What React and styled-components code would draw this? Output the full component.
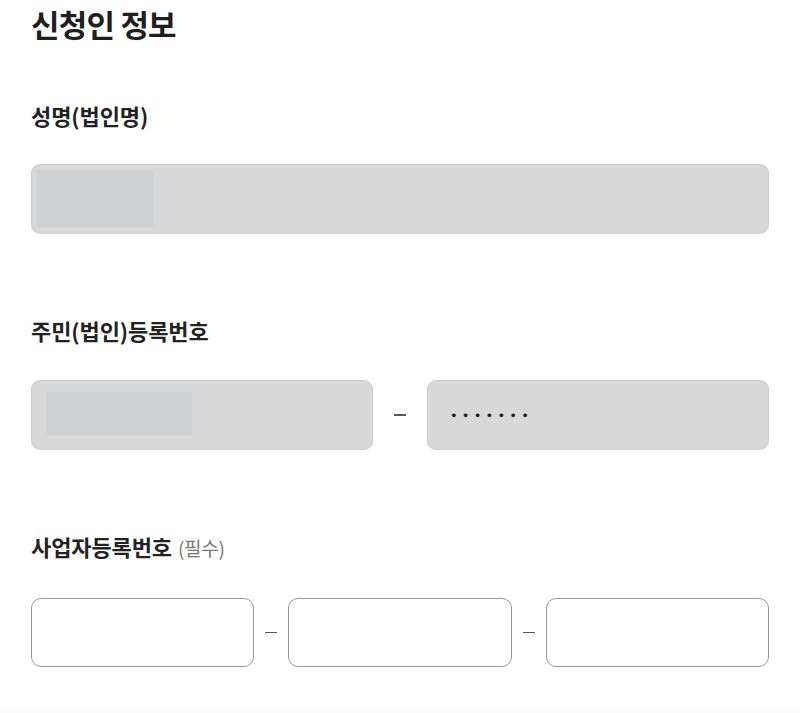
import React from 'react';
import styled, { createGlobalStyle } from 'styled-components';

const GlobalStyle = createGlobalStyle`
  html, body {
    margin: 0;
    padding: 0;
    background: #ffffff;
    font-family: 'Noto Sans CJK KR', 'Noto Sans', sans-serif;
    color: #222222;
  }
`;

const Page = styled.div`
  padding: 4px 31px 0 31px;
  min-height: 705px;
  border-bottom: 8px solid #fafafa;
  box-sizing: content-box;
`;

const Title = styled.h2`
  margin: 0 0 59px 0;
  font-size: 31px;
  line-height: 40px;
  font-weight: 700;
  letter-spacing: -0.8px;
  color: #1f1f1f;
`;

const Field = styled.section`
  margin-bottom: ${(p) => p.$gap || 0}px;
`;

const Label = styled.div`
  font-size: 22px;
  line-height: 24px;
  font-weight: 700;
  letter-spacing: -0.1px;
  color: #222222;
  margin-bottom: ${(p) => p.$gap || 37}px;

  small {
    font-size: 19px;
    font-weight: 400;
    color: #777777;
    margin-left: 6px;
    letter-spacing: -0.3px;
  }
`;

const Row = styled.div`
  display: grid;
  grid-template-columns: ${(p) => p.$cols};
  align-items: center;
`;

const Box = styled.div`
  position: relative;
  box-sizing: border-box;
  height: ${(p) => p.$h || 70}px;
  border-radius: ${(p) => (p.$disabled ? 9 : 10)}px;
  background: ${(p) => (p.$disabled ? '#d8d8d8' : '#ffffff')};
  border: ${(p) => (p.$disabled ? '1px solid #cccccc' : '1.5px solid #9a9a9a')};
  display: flex;
  align-items: center;
  padding-left: 22px;
`;

const Mask = styled.div`
  position: absolute;
  left: ${(p) => p.$x}px;
  top: ${(p) => p.$y}px;
  width: ${(p) => p.$w}px;
  height: ${(p) => p.$hh}px;
  background: #d0d1d3;
`;

const Dots = styled.span`
  font-size: 13px;
  letter-spacing: 4.2px;
  color: #1e1e1e;
  font-family: 'DejaVu Sans', sans-serif;
`;

const Dash = styled.span`
  justify-self: center;
  width: 12px;
  height: 1.5px;
  background: #555555;
`;

export default function App() {
  return (
    <>
      <GlobalStyle />
      <Page>
        <Title>신청인 정보</Title>

        <Field $gap={84}>
          <Label>성명(법인명)</Label>
          <Box $disabled>
            <Mask $x={5} $y={5} $w={116} $hh={57} />
          </Box>
        </Field>

        <Field $gap={84}>
          <Label $gap={38}>주민(법인)등록번호</Label>
          <Row $cols="1fr 54px 1fr">
            <Box $disabled>
              <Mask $x={14} $y={11} $w={146} $hh={43} />
            </Box>
            <Dash />
            <Box $disabled>
              <Dots>•••••••</Dots>
            </Box>
          </Row>
        </Field>

        <Field>
          <Label $gap={38}>
            사업자등록번호<small>(필수)</small>
          </Label>
          <Row $cols="1fr 34px 1fr 34px 1fr">
            <Box $h={69} />
            <Dash />
            <Box $h={69} />
            <Dash />
            <Box $h={69} />
          </Row>
        </Field>
      </Page>
    </>
  );
}
